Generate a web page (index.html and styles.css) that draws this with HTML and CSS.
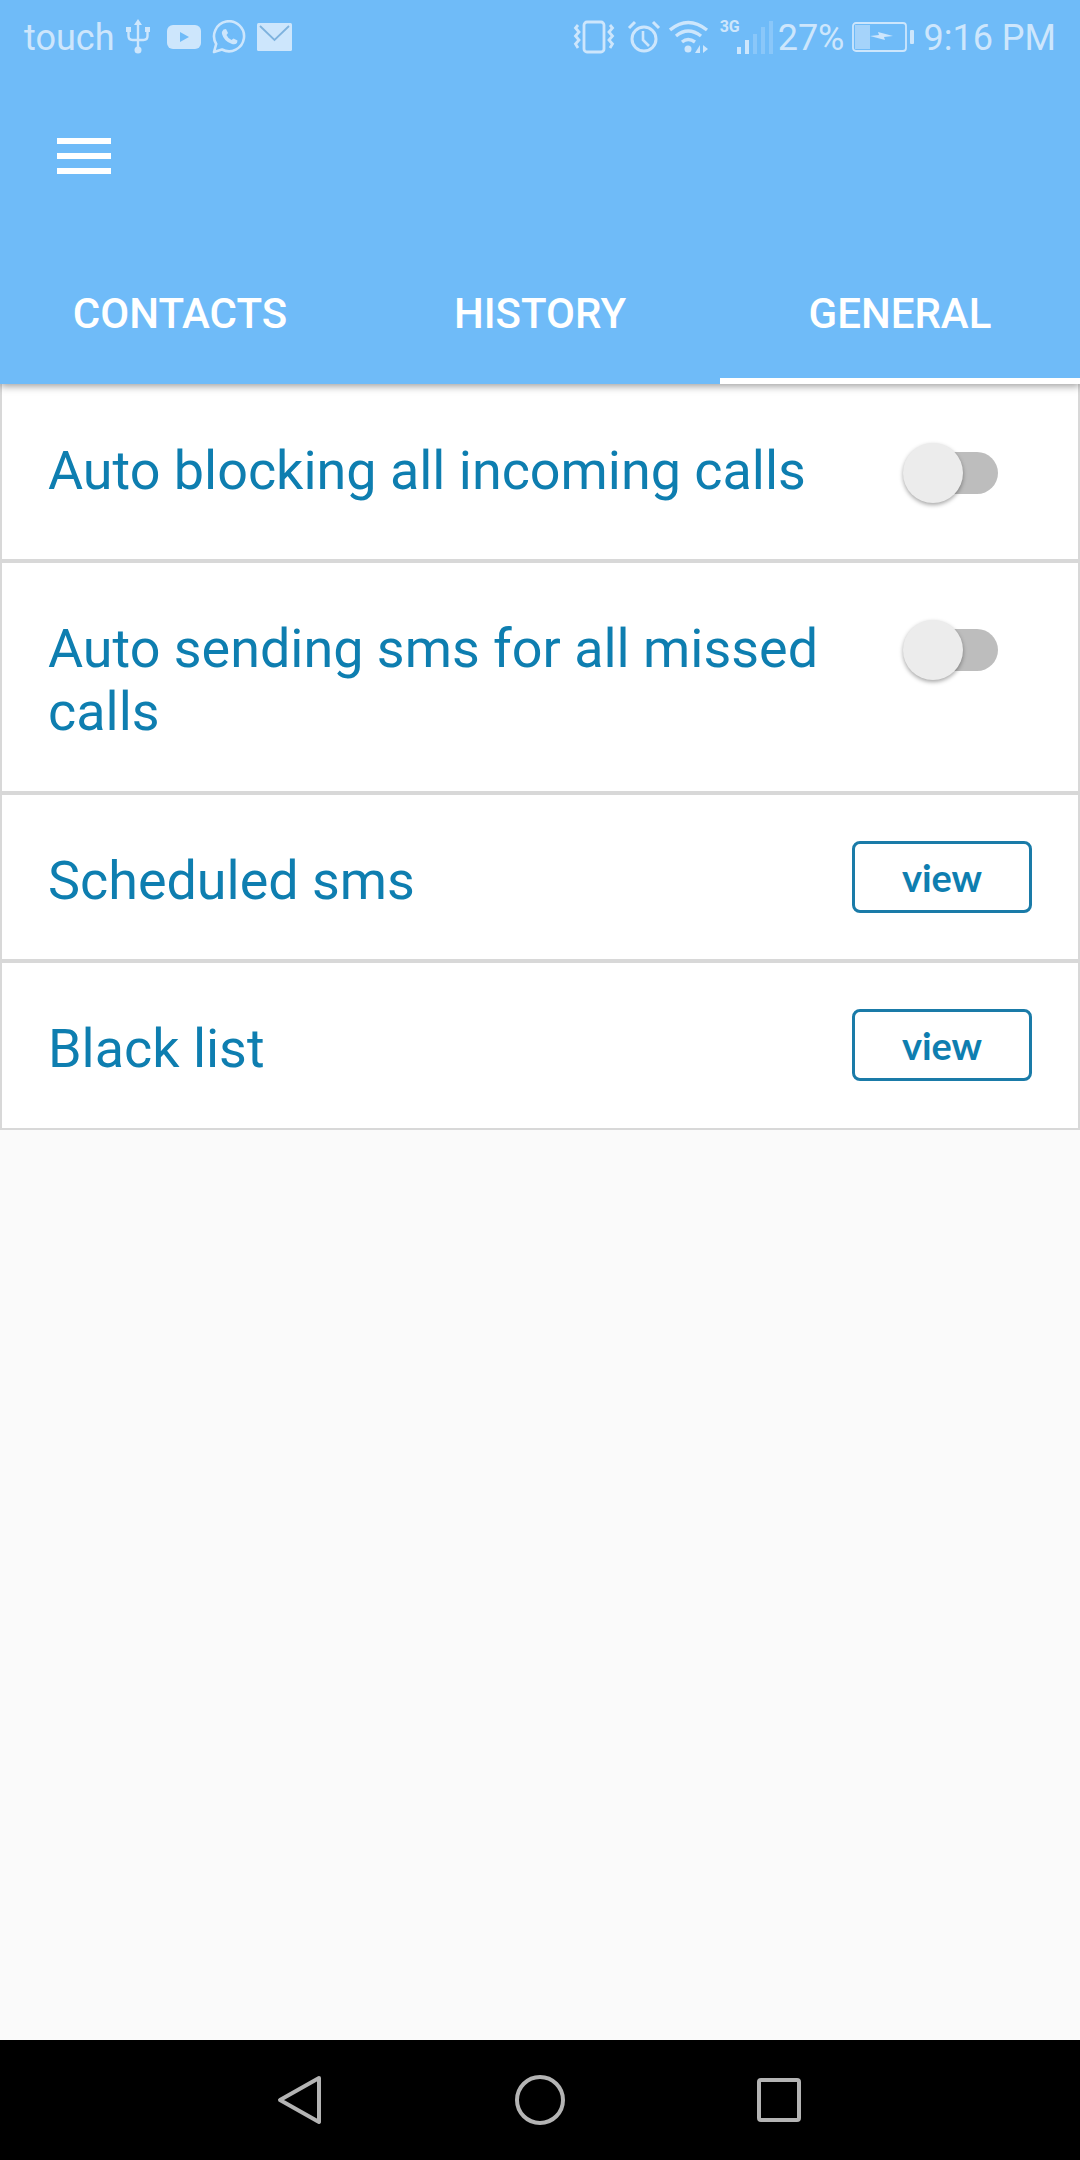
FILE: index.html
```html
<!DOCTYPE html>
<html lang="en">
<head>
<meta charset="utf-8">
<title>General</title>
<link rel="stylesheet" href="styles.css">
</head>
<body>
<div class="app">
  <header class="header">
    <div class="status">
      <div class="status-left">
        <span class="carrier">touch</span>
        <svg class="ic" width="24" height="36" viewBox="0 0 24 36"><g fill="none" stroke="#cde6fc" stroke-width="2.400"><path d="M12 3v28"/><path d="M2.500 12v5q0 4 4 4h11q4 0 4-4v-5"/></g><path d="M12 0l4 6h-8z" fill="#cde6fc"/><circle cx="12" cy="31" r="3.500" fill="#cde6fc"/><rect x="0" y="8" width="5" height="5" fill="#cde6fc"/><rect x="19" y="8" width="5" height="5" fill="#cde6fc"/></svg>
        <svg class="ic yt" width="34" height="24" viewBox="0 0 34 24"><rect width="34" height="24" rx="6" fill="#cde6fc"/><path d="M13 7l9 5-9 5z" fill="#6fbbf8"/></svg>
        <svg class="ic wa" width="34" height="34" viewBox="0 0 34 34"><path d="M2 32l2.200-8A15 15 0 1 1 10 29.500z" fill="none" stroke="#cde6fc" stroke-width="2.600" stroke-linejoin="round"/><path d="M11.500 9.500l2.500-.5 2 4-1.500 2q1.500 3.500 5 5l2-1.500 4 2-.5 2.500q-2 2-5 1-8-2.500-10-10-.5-2.500 1.500-4.500z" fill="#cde6fc"/></svg>
        <svg class="ic mail" width="35" height="28" viewBox="0 0 35 28"><rect width="35" height="28" rx="1.500" fill="#cde6fc"/><path d="M3 3l14.500 14L32 3" fill="none" stroke="#7fb3de" stroke-width="1.800"/></svg>
      </div>
      <div class="status-right">
        <svg class="ic" width="42" height="34" viewBox="0 0 42 34"><rect x="11" y="2" width="20" height="30" rx="3" fill="none" stroke="#cde6fc" stroke-width="2.800"/><path d="M5 5l-2.500 3L6 12l-3.500 4L6 20l-3.500 4 2.500 4M37 5l2.500 3L36 12l3.500 4L36 20l3.500 4-2.500 4" fill="none" stroke="#cde6fc" stroke-width="2.800"/></svg>
        <svg class="ic clock" width="34" height="34" viewBox="0 0 34 34"><circle cx="17" cy="19" r="12" fill="none" stroke="#cde6fc" stroke-width="3"/><path d="M16 11v9l6 6" fill="none" stroke="#cde6fc" stroke-width="2.600"/><path d="M2 8l6-6M32 8l-6-6" stroke="#cde6fc" stroke-width="3"/></svg>
        <svg class="ic wifi" width="42" height="34" viewBox="0 0 42 34"><g fill="none" stroke="#cde6fc" stroke-width="3.400"><path d="M1 10q18-15 37 0"/><path d="M7 16q12-10 25 0"/><path d="M13 22q6-5 13 0"/></g><circle cx="19" cy="29" r="3.500" fill="#cde6fc"/><path d="M26 33l5-8v8zM34 33v-8l5 4z" fill="#cde6fc"/></svg>
        <div class="signal">
          <span class="net">3G</span>
          <div class="bars"><i class="b1"></i><i class="b2"></i><i class="b3"></i><i class="b4"></i><i class="b5"></i></div>
        </div>
        <span class="stat-text pct">27%</span>
        <svg class="ic batt" width="62" height="30" viewBox="0 0 62 30"><rect x="1" y="1" width="53" height="28" rx="3" fill="none" stroke="#cde6fc" stroke-width="1.800"/><rect x="3" y="3" width="15" height="24" fill="#a5d3fa"/><path d="M18 14l9-1-1-3 15 4-9 1 1 3z" fill="#cde6fc"/><rect x="58" y="8" width="4" height="14" rx="1" fill="#cde6fc"/></svg>
        <span class="stat-text time">9:16 PM</span>
      </div>
    </div>
    <div class="toolbar">
      <div class="menu"><i></i><i></i><i></i></div>
    </div>
    <nav class="tabs">
      <div class="tab">CONTACTS</div>
      <div class="tab">HISTORY</div>
      <div class="tab active">GENERAL</div>
    </nav>
  </header>
  <main class="list">
    <section class="row row-a">
      <div class="label">Auto blocking all incoming calls</div>
      <div class="switch"><span class="track"></span><span class="thumb"></span></div>
    </section>
    <section class="row row-b">
      <div class="label">Auto sending sms for all missed calls</div>
      <div class="switch"><span class="track"></span><span class="thumb"></span></div>
    </section>
    <section class="row row-c">
      <div class="label">Scheduled sms</div>
      <div class="btn">view</div>
    </section>
    <section class="row row-c last">
      <div class="label">Black list</div>
      <div class="btn">view</div>
    </section>
  </main>
  <div class="spacer"></div>
  <footer class="nav">
    <svg width="46" height="50" viewBox="0 0 46 50"><path d="M42 3L3 25l39 22z" fill="none" stroke="#b4b4b4" stroke-width="4" stroke-linejoin="round"/></svg>
    <svg width="50" height="50" viewBox="0 0 50 50"><circle cx="25" cy="25" r="23" fill="none" stroke="#b4b4b4" stroke-width="4"/></svg>
    <svg width="46" height="46" viewBox="0 0 46 46"><rect x="3" y="3" width="40" height="40" rx="2" fill="none" stroke="#b4b4b4" stroke-width="4"/></svg>
  </footer>
</div>
</body>
</html>
```
FILE: styles.css
```css
* { box-sizing: border-box; }
html, body { margin: 0; padding: 0; }
body { width: 1080px; height: 2160px; overflow: hidden; background: #fafafa; font-family: Roboto, "Liberation Sans", sans-serif; }
.app { display: flex; flex-direction: column; height: 2160px; }

.header { height: 384px; background: #6fbbf8; box-shadow: 0 2px 8px rgba(0,0,0,.4); position: relative; z-index: 2; display: flex; flex-direction: column; flex: none; }
.status { height: 72px; display: flex; justify-content: space-between; align-items: center; padding: 2px 24px 0; color: #cde6fc; }
.status-left, .status-right { display: flex; align-items: center; }
.carrier { font-size: 36px; margin: 2px 12px 0 0; }
.ic { display: block; flex: none; }
.yt { margin-left: 17px; }
.wa { margin-left: 11px; }
.mail { margin-left: 11px; }
.clock { margin-left: 12px; }
.wifi { margin-left: 8px; }
.signal { position: relative; width: 53px; height: 33px; margin-left: 9px; }
.net { position: absolute; left: 0; top: -2px; font-size: 16px; font-weight: 700; line-height: 16px; }
.bars { position: absolute; right: 0; bottom: 0; display: flex; align-items: flex-end; gap: 4px; }
.bars i { display: block; width: 4px; background: #8ac7f9; }
.bars .b1 { height: 7px; background: #cde6fc; }
.bars .b2 { height: 14px; background: #cde6fc; }
.bars .b3 { height: 20px; }
.bars .b4 { height: 27px; }
.bars .b5 { height: 33px; }
.stat-text { font-size: 36px; margin-top: 2px; }
.pct { margin-left: 5px; }
.batt { margin-left: 7px; }
.time { margin-left: 10px; }

.toolbar { height: 192px; padding: 66px 0 0 57px; flex: none; }
.menu { width: 54px; display: flex; flex-direction: column; gap: 9px; }
.menu i { display: block; height: 6px; background: #fff; }

.tabs { display: flex; flex: 1; }
.tab { flex: 1; display: flex; justify-content: center; padding-top: 25px; font-size: 42px; font-weight: 500; color: #fff; }
.tab.active { border-bottom: 6px solid #fff; }

.list { flex: none; }
.row { display: flex; justify-content: space-between; background: #fff; border-left: 2px solid #d8d8d8; border-right: 2px solid #d8d8d8; border-bottom: 4px solid #d8d8d8; padding-left: 46px; }
.row.last { border-bottom-width: 2px; }
.row-a { height: 179px; padding-top: 55px; }
.row-b { height: 232px; padding-top: 54px; }
.row-c { height: 168px; align-items: center; }
.row-c .label { margin-top: 6px; }
.last { height: 167px; padding-bottom: 1px; }
.label { font-size: 53.900px; line-height: 63px; color: #0e7eb0; width: 780px; }
.switch { position: relative; width: 96px; height: 62px; margin: 4px 80px 0 0; flex: none; }
.row-b .switch { margin-top: 3px; }
.track { position: absolute; left: 16px; right: 0; top: 9px; height: 42px; border-radius: 21px; background: #bdbdbd; }
.thumb { position: absolute; left: 1px; top: 0; width: 60px; height: 60px; border-radius: 50%; background: #ececec; box-shadow: 0 2px 4px rgba(0,0,0,.35); }
.btn { width: 180px; height: 72px; margin-right: 46px; border: 3px solid #1a7ba8; border-radius: 8px; display: flex; align-items: center; justify-content: center; font-size: 38px; font-weight: 700; font-family: Lato, "Open Sans", sans-serif; color: #0e7eb0; }

.spacer { flex: 1; }
.nav { height: 120px; background: #000; flex: none; display: flex; align-items: center; padding: 0 0 0 277px; }
.nav svg { display: block; flex: none; }
.nav svg:nth-child(2) { margin-left: 192px; }
.nav svg:nth-child(3) { margin-left: 191px; }
```
